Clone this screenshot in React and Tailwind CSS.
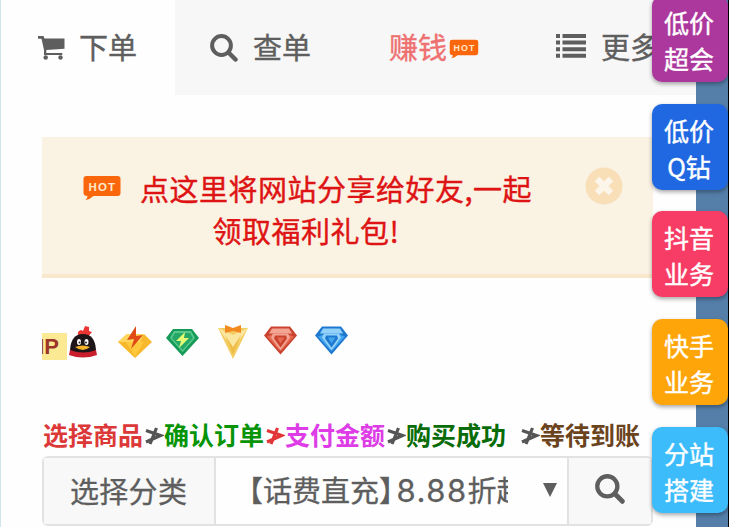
import React from "react";

const sideLinks = [
  { lines: ["低价", "超会"], color: "bg-[#ac389e]" },
  { lines: ["低价", "Q钻"], color: "bg-[#2068e2]" },
  { lines: ["抖音", "业务"], color: "bg-[#f73d65]" },
  { lines: ["快手", "业务"], color: "bg-[#fea50a]" },
  { lines: ["分站", "搭建"], color: "bg-[#3dbcfb]" },
];

const CartIcon = () => (
  <svg className="h-6 w-7 shrink-0" viewBox="0 0 28 24" fill="#5e5e5e">
    <path d="M1 0h5.500l1 2.500H27.500v10.200L9.300 14v3h16v2H7V14L4.500 2.800H1z" />
    <circle cx="8.700" cy="21.500" r="2.200" />
    <circle cx="23.500" cy="21.500" r="2.200" />
  </svg>
);

const SearchIcon = ({ className }) => (
  <svg className={className} viewBox="0 0 28 28" fill="none" stroke="#5e5e5e">
    <circle cx="11.500" cy="11.500" r="9.400" strokeWidth="4" />
    <path d="M18.500 18.500l7 7" strokeWidth="4.500" strokeLinecap="round" />
  </svg>
);

const ListIcon = () => (
  <svg className="mb-1 h-6 w-[30px] shrink-0" viewBox="0 0 30 24" fill="#5e5e5e">
    <path d="M0 0h4v4H0zM6.500 0H30v4H6.500zM0 6.600h4v4H0zM6.500 6.600H30v4H6.500zM0 13.200h4v4H0zM6.500 13.200H30v4H6.500zM0 19.800h4v4H0zM6.500 19.800H30v4H6.500z" />
  </svg>
);

const HotIcon = ({ className }) => (
  <svg className={className} viewBox="0 0 39 26">
    <path d="M4 1h31q3 0 3 3v14q0 3-3 3H11q-3 3-8 4q2-2 2-4q-4 0-4-3V4q0-3 3-3z" fill="#f9660b" />
    <text x="19.500" y="16" textAnchor="middle" fontSize="11.500" fontWeight="700" textLength="27" fontFamily="Liberation Sans, sans-serif" fill="#ffe9c9">
      HOT
    </text>
  </svg>
);

const Penguin = () => (
  <svg className="mr-[21px] h-8 w-7" viewBox="0 0 28 32">
    <path d="M9 9q-1-4 3-5l2 1 2-5 4 1v4l3 1-4 5z" fill="#ed3434" />
    <path d="M1 24Q2 8 14 8t13 16l-3 5H4z" fill="#1d1517" />
    <path d="M1 24q13 5 26 0l1 5q-14 5-28 0z" fill="#c91e2b" />
    <ellipse cx="10" cy="16" rx="2" ry="3" fill="#fff" />
    <ellipse cx="17.500" cy="16" rx="2" ry="3" fill="#fff" />
    <circle cx="10.500" cy="16.500" r="1" fill="#222" />
    <circle cx="17" cy="16.500" r="1" fill="#222" />
    <path d="M6 21q8-3 15 0q-7 6-15 0z" fill="#f4b52c" />
  </svg>
);

const YellowBolt = () => (
  <svg className="mr-[14px] h-8 w-[34px]" viewBox="0 0 34 32">
    <path d="M9 8h17l8 8-17 16L0 16z" fill="#f7b82c" />
    <path d="M9 8h17l-4 8H8L0 16z" fill="#ffd65c" />
    <path d="M8 16h18l-9 14z" fill="#ffc93d" />
    <path d="M18 0l-9 14 7-1-3 10 12-14-7 1z" fill="#e04a18" />
  </svg>
);

const GreenBolt = () => (
  <svg className="mr-[18px] h-[29px] w-[33px]" viewBox="0 0 33 29">
    <path d="M7 1h19l7 9-16.500 18L0 10z" fill="#169a57" />
    <path d="M8 3h17l4 7-12.500 14L4 10z" fill="#5ac88e" />
    <path d="M9 5h15l3 5-10.500 12L6 10z" fill="#25a765" />
    <path d="M19 4l-9 9h5l-2 7 10-10h-5z" fill="#e3fb74" />
  </svg>
);

const YellowTie = () => (
  <svg className="mr-[15px] h-[34px] w-8" viewBox="0 0 32 34">
    <path d="M1 3h30L16 34z" fill="#f4cd62" />
    <path d="M1 3l15 7L31 3 16 24z" fill="#fbe6a0" />
    <path d="M8 10l8 12 8-12-8 20z" fill="#edbd48" />
    <path d="M8 0l8 3 8-3v8l-8-2-8 2z" fill="#f28a20" />
  </svg>
);

const Gem = ({ dark, mid, light, className }) => (
  <svg className={className} viewBox="0 0 33 28">
    <path d="M7 0h19l7 9-16.500 19L0 9z" fill={dark} />
    <path d="M8 2h17l3 5H5z" fill={light} />
    <path d="M3 10l6-2 7.500 17z" fill={mid} />
    <path d="M30 10l-6-2-7.500 17z" fill={mid} />
    <path d="M9 7h15l2 4-9.500 13L7 11z" fill={light} />
    <path d="M11 9h11l1 3-6.500 9L10 12z" fill={dark} />
    <path d="M13 11l3.500 6 4-6z" fill={mid} />
  </svg>
);

const Step = ({ text, color }) => <span className={`w-[101px] shrink-0 ${color}`}>{text}</span>;

const Arrow = ({ color = "stroke-[#555]" }) => (
  <svg className={`mt-0.5 h-5 w-5 shrink-0 fill-none ${color}`} viewBox="0 0 20 20">
    <path d="M2 4.500l14.500 5L2 16M12.500 2L6 18" strokeWidth="3.200" />
  </svg>
);

const App = () => {
  return (
    <div className="relative h-[527px] w-[729px] overflow-hidden border-r border-black bg-[#557fa9] font-['Noto_Sans_CJK_SC',sans-serif] text-[#5e5e5e]">
      <div className="h-full w-[696px] border-l border-[#cfe5ea] bg-[#fefefe]">
        {/* Tabs */}
        <div className="flex h-[95px] bg-[#f7f7f7] text-[29px] leading-[88px] whitespace-nowrap [-webkit-text-stroke:0.4px]">
          <div className="flex w-[174px] items-center bg-[#fefefe] pl-9">
            <CartIcon />
            <span className="mb-1 ml-[14px]">下单</span>
          </div>
          <div className="flex w-[174px] items-center pl-[35px]">
            <SearchIcon className="h-7 w-7 shrink-0" />
            <span className="mb-1 ml-[15px]">查单</span>
          </div>
          <div className="flex w-[173px] items-center pl-10 text-[#ee7070]">
            <span className="mb-1">赚钱</span>
            <HotIcon className="mt-0.5 ml-0.5 h-5 w-[30px] shrink-0 [-webkit-text-stroke:0]" />
          </div>
          <div className="flex w-[174px] items-center overflow-hidden pl-[34px]">
            <ListIcon />
            <span className="mb-1 ml-[15px]">更多</span>
          </div>
        </div>

        {/* Notice */}
        <div className="mt-[42px] ml-[41px] flex h-[141px] w-[611px] items-start border-b-4 border-[#fae8cd] bg-[#faf2e3] pt-[30px] pl-10">
          <div className="w-[452px] text-center text-[29px] leading-[42px] tracking-[0.5px] whitespace-nowrap text-[#de1414]">
            <div className="flex items-center">
              <HotIcon className="mr-[18px] h-[26px] w-10 shrink-0" />
              <span className="[-webkit-text-stroke:0.4px]">点这里将网站分享给好友,一起</span>
            </div>
            <div className="pr-1 [-webkit-text-stroke:0.4px]">领取福利礼包!</div>
          </div>
          <svg className="ml-[51px] h-[38px] w-[38px]" viewBox="0 0 38 38">
            <circle cx="19" cy="19" r="18.500" fill="#f9dfb8" />
            <path d="M12 12l14 14M26 12L12 26" stroke="#fcf5e9" strokeWidth="6.500" />
          </svg>
        </div>

        {/* Gems */}
        <div className="mt-[47px] ml-[41px] flex h-[34px] items-center">
          <div className="mt-2 mr-0.5 flex h-[27px] w-[25px] items-center justify-end overflow-hidden bg-[#fbe993] pr-2 font-['Liberation_Sans',sans-serif] text-[22px] font-bold text-[#9c3528]">
            IP
          </div>
          <Penguin />
          <YellowBolt />
          <GreenBolt />
          <YellowTie />
          <Gem className="mr-[18px] mb-1 h-[29px] w-[33px]" dark="#c9432f" mid="#e66a52" light="#f3a593" />
          <Gem className="mb-1 h-[29px] w-[33px]" dark="#1d78cf" mid="#42a5ee" light="#92d2fa" />
        </div>

        {/* Order steps */}
        <div className="mt-[56px] ml-[42px] flex h-[39px] items-center text-[25px] leading-[39px] font-bold whitespace-nowrap">
          <Step text="选择商品" color="text-[#dc3838]" />
          <Arrow />
          <Step text="确认订单" color="text-[#079407]" />
          <Arrow color="stroke-[#e23535]" />
          <Step text="支付金额" color="text-[#dd3ce6]" />
          <Arrow />
          <Step text="购买成功" color="text-[#086c08]" />
          <span className="w-[13px]" />
          <Arrow />
          <Step text="等待到账" color="text-[#6b431c]" />
        </div>

        {/* Category select */}
        <div className="mt-0.5 ml-[41px] flex h-[70px] w-[611px] rounded-md border-2 border-[#e2e2e2] text-[29px] leading-[64px] whitespace-nowrap">
          <div className="w-[172px] border-r-2 border-[#e2e2e2] bg-[#f8f8f8] pl-[26px] tracking-[0.3px] [-webkit-text-stroke:0.3px]">选择分类</div>
          <div className="flex flex-1 items-center pl-[18px]">
            <div className="mb-0.5 w-[274px] overflow-hidden [-webkit-text-stroke:0.3px]">
              【话费直充<span className="mr-[3px] [font-feature-settings:'halt']">】</span>
              <span className="font-['Inter',sans-serif] text-[31px] tracking-[1.5px]">8.88</span>折起
            </div>
            <svg className="mb-0.5 ml-[35px] h-[14px] w-[14px]" viewBox="0 0 14 14">
              <path d="M0 0h14L7 14z" fill="#5e5e5e" />
            </svg>
          </div>
          <div className="flex w-[84px] items-center border-l-2 border-[#e2e2e2] bg-[#f8f8f8] pb-1 pl-[26px]">
            <SearchIcon className="h-[30px] w-[30px]" />
          </div>
        </div>
      </div>

      {/* Floating links */}
      <div className="absolute -top-1 right-0 flex flex-col gap-[21.700px]">
        {sideLinks.map((link, i) => (
          <div key={i} className={`h-[86px] w-[76px] rounded-[10px] pt-2 pr-0.5 text-center text-[25px] leading-[36px] text-white shadow-[0_2px_4px_rgba(0,0,0,0.35)] [-webkit-text-stroke:0.4px] ${link.color}`}>
            {link.lines.map((line) => (
              <div key={line}>{line}</div>
            ))}
          </div>
        ))}
      </div>
    </div>
  );
};

export default App;
